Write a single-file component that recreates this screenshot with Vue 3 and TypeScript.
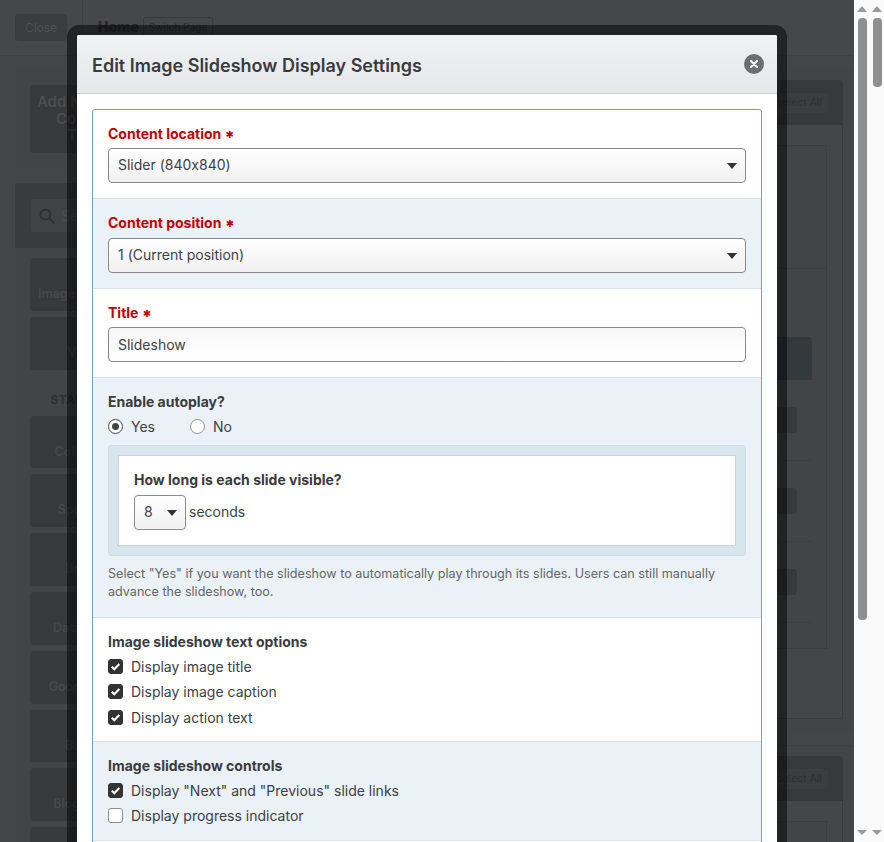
<script setup lang="ts">
const tilesA = ['Image Carousel', 'Video']
const tilesB = ['Collection', 'Spotlight', 'Iframe', 'Data Table', 'Google Map', 'Button', 'Blog Posts']
const textOptions = [
  { label: 'Display image title', on: true },
  { label: 'Display image caption', on: true },
  { label: 'Display action text', on: true }
]
const controlOptions = [
  { label: 'Display "Next" and "Previous" slide links', on: true },
  { label: 'Display progress indicator', on: false }
]
</script>

<template>
  <div class="root">
    <div class="backdrop">
      <header class="topbar">
        <div class="topbar-left"><span class="btn-close">Close</span></div>
        <div class="topbar-title">
          <strong>Home</strong>
          <span class="switch">Switch Page</span>
        </div>
      </header>
      <div class="columns">
        <aside class="sidebar">
          <div class="add-panel"><div class="add-tile">Add New Tile<br />Content<br />Type</div></div>
          <div class="search-panel">
            <div class="search-input">
              <svg width="18" height="18" viewBox="0 0 18 18" fill="none" stroke="#2f3032" stroke-width="2">
                <circle cx="7.5" cy="7.5" r="5" />
                <path d="M11.5 11.5l5 5" />
              </svg>
              <span>Search</span>
            </div>
          </div>
          <div class="tiles-panel">
            <div v-for="t in tilesA" :key="t" class="tile">{{ t }}</div>
            <div class="tiles-head">STANDARD</div>
            <div v-for="t in tilesB" :key="t" class="tile">{{ t }}</div>
            <div class="tile"></div>
          </div>
        </aside>
        <main class="main">
          <section class="group">
            <div class="group-head"><span class="select-all">Deselect All</span></div>
            <div class="group-body first">
              <div class="inner">
                <div class="inner-top"></div>
                <div class="faint"></div>
                <div class="teal"></div>
                <div v-for="n in 3" :key="n" class="row">
                  <span class="gear">
                    <svg width="16" height="16" viewBox="0 0 16 16" fill="none" stroke="#2e2f31">
                      <circle cx="8" cy="8" r="2.5" stroke-width="2" />
                      <circle cx="8" cy="8" r="5.5" stroke-width="2.4" stroke-dasharray="2.2 2.1" />
                    </svg>
                  </span>
                </div>
              </div>
            </div>
          </section>
          <section class="group second">
            <div class="group-head"><span class="select-all">Deselect All</span></div>
            <div class="group-body"><div class="inner"></div></div>
          </section>
        </main>
      </div>
    </div>

    <div class="scrollbars">
      <div class="track">
        <span class="arrow up"></span>
        <div class="thumb-area"><div class="thumb long"></div></div>
        <span class="arrow down"></span>
      </div>
      <div class="track">
        <span class="arrow up"></span>
        <div class="thumb-area"><div class="thumb short"></div></div>
        <span class="arrow down"></span>
      </div>
    </div>

    <div class="modal">
      <div class="modal-head">
        <h2>Edit Image Slideshow Display Settings</h2>
        <span class="modal-x">
          <svg width="10" height="10" viewBox="0 0 10 10" stroke="#f4f4f4" stroke-width="2.2" stroke-linecap="round">
            <path d="M2 2l6 6M8 2l-6 6" />
          </svg>
        </span>
      </div>
      <div class="modal-body">
        <div class="form">
          <div class="sec">
            <div class="lbl req">Content location <i>✱</i></div>
            <div class="ctl sel">Slider (840x840)<b class="caret"></b></div>
          </div>
          <div class="sec alt">
            <div class="lbl req">Content position <i>✱</i></div>
            <div class="ctl sel">1 (Current position)<b class="caret"></b></div>
          </div>
          <div class="sec">
            <div class="lbl req">Title <i>✱</i></div>
            <div class="ctl field">Slideshow</div>
          </div>
          <div class="sec alt autoplay">
            <div class="lbl">Enable autoplay?</div>
            <div class="radios">
              <span class="opt"><span class="radio on"></span>Yes</span>
              <span class="opt"><span class="radio"></span>No</span>
            </div>
            <div class="sub-wrap">
              <div class="sub">
                <div class="lbl">How long is each slide visible?</div>
                <div class="sub-row">
                  <div class="ctl sel mini">8<b class="caret"></b></div>
                  <span>seconds</span>
                </div>
              </div>
            </div>
            <p class="help">Select "Yes" if you want the slideshow to automatically play through its slides. Users can still manually advance the slideshow, too.</p>
          </div>
          <div class="sec checks">
            <div class="lbl">Image slideshow text options</div>
            <div v-for="o in textOptions" :key="o.label" class="check-row">
              <span class="box" :class="{ on: o.on }">
                <svg v-if="o.on" width="11" height="11" viewBox="0 0 11 11" fill="none" stroke="#fff" stroke-width="2">
                  <path d="M1.8 5.8l2.5 2.5 5-5.3" />
                </svg>
              </span>
              {{ o.label }}
            </div>
          </div>
          <div class="sec alt checks">
            <div class="lbl">Image slideshow controls</div>
            <div v-for="o in controlOptions" :key="o.label" class="check-row">
              <span class="box" :class="{ on: o.on }">
                <svg v-if="o.on" width="11" height="11" viewBox="0 0 11 11" fill="none" stroke="#fff" stroke-width="2">
                  <path d="M1.8 5.8l2.5 2.5 5-5.3" />
                </svg>
              </span>
              {{ o.label }}
            </div>
          </div>
          <div class="sec tail"></div>
        </div>
      </div>
    </div>
  </div>
</template>

<style>
html, body { margin: 0; overflow: hidden; }
</style>

<style scoped>
* { box-sizing: border-box; }
.root {
  position: relative;
  display: flex;
  width: 884px;
  height: 842px;
  overflow: hidden;
  font-family: Inter, "Liberation Sans", sans-serif;
  font-size: 14px;
  font-feature-settings: "calt" 0;
  color: #404144;
}

/* dimmed page */
.backdrop {
  width: 854px;
  height: 842px;
  overflow: hidden;
  background: #434547;
  font-weight: 600;
}
.topbar {
  display: flex;
  height: 56px;
  background: #46474a;
  border-bottom: 1px solid #3e4042;
}
.topbar-left {
  width: 83px;
  padding: 14px 15px;
  border-right: 1px solid #3e4042;
}
.btn-close {
  display: block;
  width: 52px;
  height: 27px;
  line-height: 27px;
  text-align: center;
  border-radius: 4px;
  background: #3b3c3e;
  color: #4f5052;
  font-size: 12px;
  font-weight: 400;
}
.topbar-title {
  display: flex;
  align-items: flex-start;
  gap: 4px;
  padding: 17px 0 0 15px;
  color: #2a2b2d;
}
.topbar-title strong { font-size: 14px; line-height: 20px; }
.switch {
  width: 70px;
  height: 20px;
  line-height: 18px;
  text-align: center;
  border: 1px solid #3a3b3d;
  border-radius: 2px;
  font-size: 10px;
  font-weight: 400;
  color: #2f3032;
  white-space: nowrap;
}
.columns { display: flex; padding-top: 14px; }
.sidebar { width: 140px; margin-left: 15px; flex: none; }
.add-panel {
  height: 97px;
  padding: 15px;
  background: #424446;
  border-radius: 4px;
}
.add-tile {
  height: 68px;
  padding-top: 9px;
  border-radius: 4px;
  background: #38393b;
  color: #4c4d4f;
  font-size: 15px;
  line-height: 16.5px;
  text-align: center;
}
.search-panel {
  height: 65px;
  margin-top: 16px;
  padding: 16px;
  background: #3a3b3d;
  border-radius: 4px 4px 0 0;
}
.search-input {
  display: flex;
  align-items: center;
  gap: 5px;
  height: 33px;
  padding-left: 7px;
  border-radius: 3px;
  background: #414244;
  color: #4c4d4f;
  font-weight: 400;
}
.tiles-panel {
  display: flex;
  flex-direction: column;
  gap: 6px;
  padding: 10px 15px 0;
  background: #424446;
}
.tile {
  flex: none;
  height: 52.8px;
  padding-top: 27px;
  border-radius: 4px;
  background: #38393b;
  color: #47484a;
  font-size: 12.5px;
  line-height: 18px;
  text-align: center;
  white-space: nowrap;
}
.tiles-head {
  height: 34px;
  padding-top: 16px;
  text-align: center;
  font-size: 12px;
  line-height: 16px;
  letter-spacing: 0.3px;
  font-weight: 700;
  color: #2f3032;
}
.main { flex: 1; margin-left: 15px; min-width: 0; }
.group {
  height: 660px;
  padding: 10px 11px 0 0;
  background: #424446;
  border-radius: 4px;
}
.group.second { height: 200px; margin-top: 15px; border-top: 1px solid #3e4042; }
.group-head {
  display: flex;
  justify-content: flex-end;
  align-items: center;
  height: 45px;
  padding-right: 15px;
  background: #38393b;
  border-radius: 4px 4px 0 0;
}
.select-all {
  padding: 3px 6px;
  border-radius: 3px;
  background: #3c3d3f;
  color: #2f3032;
  font-size: 10.5px;
  line-height: 14px;
  font-weight: 400;
}
.group-body {
  height: 594px;
  padding: 20px 15px 0;
  border: 1px solid #3a3b3d;
  border-top: 0;
  background: #454648;
}
.inner {
  height: 504px;
  padding-right: 14px;
  border: 1px solid #3c3d3f;
  background: #434446;
}
.inner-top { height: 123px; border-bottom: 1px solid #3c3d3f; margin-right: -14px; }
.faint { height: 68px; }
.teal { height: 43px; background: #33393c; border-radius: 3px 3px 0 0; }
.row {
  display: flex;
  justify-content: flex-end;
  align-items: center;
  height: 81px;
  border-bottom: 1px solid #3e3f41;
  padding-right: 15px;
}
.gear {
  display: flex;
  align-items: center;
  justify-content: center;
  width: 60px;
  height: 26px;
  border-radius: 4px;
  background: #38393b;
}

/* scrollbars */
.scrollbars {
  display: flex;
  flex: none;
  width: 30px;
  height: 842px;
  padding-left: 3px;
  gap: 5px;
  background: #fafafa;
}
.track {
  display: flex;
  flex-direction: column;
  align-items: center;
  width: 10px;
  height: 842px;
}
.thumb-area { flex: 1; width: 9px; padding-top: 6px; }
.thumb { width: 9px; border-radius: 4px; background: #8f8f8f; }
.thumb.long { height: 602px; }
.thumb.short { height: 69px; }
.arrow { width: 0; height: 0; border-left: 5px solid transparent; border-right: 5px solid transparent; }
.arrow.up { margin-top: 6px; border-bottom: 6px solid #9a9a9a; }
.arrow.down { margin-bottom: 7px; border-top: 5px solid #9a9a9a; }

/* modal */
.modal {
  position: absolute;
  left: 67px;
  top: 25px;
  width: 720px;
  height: 900px;
  border: 10px solid rgba(0, 0, 0, 0.5);
  border-radius: 12px;
  background: #fff;
  background-clip: padding-box;
}
.modal-head {
  display: flex;
  align-items: center;
  justify-content: space-between;
  height: 59px;
  padding: 0 13px 0 15px;
  background: linear-gradient(#f0f1f3, #e6e7e9);
  border-bottom: 1px solid #c8cacc;
  border-radius: 2px 2px 0 0;
}
.modal-head h2 {
  margin: 3px 0 0;
  font-size: 18px;
  font-weight: 600;
  color: #3a3b3e;
}
.modal-x {
  display: flex;
  align-items: center;
  justify-content: center;
  width: 20px;
  height: 20px;
  border-radius: 50%;
  background: #6b6d70;
}
.modal-body { padding: 15px; }
.form {
  border: 1px solid #7d9fb5;
  border-radius: 3px;
  overflow: hidden;
}
.sec {
  padding: 14px 15px 15px;
  border-bottom: 1px solid #d7e2eb;
  height: 89.3px;
}
.sec.alt { background: #eaf1f7; }
.lbl { font-weight: 700; height: 20px; line-height: 20px; margin-bottom: 4.3px; white-space: nowrap; color: #3a3b3e; }
.lbl.req { color: #c00000; }
.lbl i {
  font-family: "DejaVu Sans", sans-serif;
  font-style: normal;
  font-size: 10px;
  line-height: 0;
  vertical-align: 1px;
  margin-left: 1px;
}
.ctl {
  position: relative;
  height: 35px;
  line-height: 32px;
  padding-left: 9px;
  border: 1px solid #8a8a8a;
  border-radius: 4px;
}
.sel { background: linear-gradient(#fff, #f1f1f1); }
.field { background: linear-gradient(#f7f7f7, #fff); line-height: 33px; }
.caret {
  position: absolute;
  right: 8px;
  top: 14px;
  width: 0;
  height: 0;
  border-left: 5.5px solid transparent;
  border-right: 5.5px solid transparent;
  border-top: 6px solid #333;
}
.autoplay { height: 240px; }
.autoplay > .lbl { margin-bottom: 5px; }
.radios { display: flex; gap: 35px; height: 20px; line-height: 20px; }
.opt { display: flex; align-items: center; gap: 8px; }
.radio {
  position: relative;
  width: 15px;
  height: 15px;
  border: 1px solid #8f8f8f;
  border-radius: 50%;
  background: #fff;
}
.radio.on { border-color: #444; }
.radio.on::after {
  content: "";
  position: absolute;
  left: 3px;
  top: 3px;
  width: 7px;
  height: 7px;
  border-radius: 50%;
  background: #444;
}
.sub-wrap {
  margin-top: 8px;
  padding: 9px;
  height: 111px;
  background: #d9e5ed;
  border: 1px solid #cfdde7;
  border-radius: 3px;
}
.sub {
  height: 91px;
  padding: 14px 15px;
  background: #fff;
  border: 1px solid #c5d5e1;
}
.sub .lbl { margin-bottom: 5px; }
.sub-row { display: flex; align-items: center; gap: 3px; }
.sub-row > span { margin-top: -1px; }
.mini { width: 52px; }
.help {
  margin: 9px 0 0;
  font-size: 12.6px;
  line-height: 18px;
  color: #666;
}
.checks { height: 124px; padding-bottom: 0; }
.checks.alt { height: 99px; }
.checks .lbl { margin-bottom: 2.05px; }
.check-row {
  display: flex;
  align-items: center;
  gap: 8px;
  height: 25.3px;
}
.box {
  display: flex;
  align-items: center;
  justify-content: center;
  width: 15px;
  height: 15px;
  border: 1px solid #8f8f8f;
  border-radius: 3px;
  background: #fff;
}
.box.on { background: #333; border-color: #333; }
.tail { border-bottom: 0; }
</style>
